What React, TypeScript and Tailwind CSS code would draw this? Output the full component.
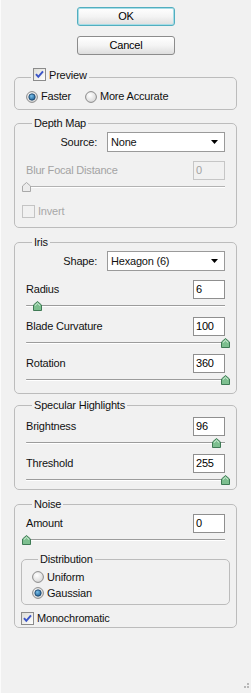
import type { ReactNode } from "react";

function Btn({ label, primary }: { label: string; primary?: boolean }) {
    return (
        <button
            className={`ml-[77px] flex h-[19px] w-[98px] items-center justify-center rounded-[3px] border bg-gradient-to-b from-white via-[#f4f4f4] to-[#dedede] text-[11px] text-black ${primary ? "border-[#52aebf] shadow-[inset_0_0_0_1px_#a6dde7]" : "border-[#8c8c8c]"}`}
        >
            {label}
        </button>
    );
}

function Check({ checked, disabled }: { checked?: boolean; disabled?: boolean }) {
    return (
        <svg width="13" height="13" viewBox="0 0 13 13" className="shrink-0">
            <defs>
                <linearGradient id="cbg" x1="0" y1="0" x2="1" y2="1">
                    <stop offset="0" stopColor="#dcdcd6" />
                    <stop offset="1" stopColor="#ffffff" />
                </linearGradient>
            </defs>
            <rect x="0.5" y="0.5" width="12" height="12" fill={disabled ? "#f1f1f1" : "url(#cbg)"} stroke={disabled ? "#c4c4c4" : "#8b8b8b"} />
            {checked && <path d="M3 6.2 L5.3 8.8 L10 3.4" fill="none" stroke="#3b55c8" strokeWidth="2" />}
        </svg>
    );
}

function Radio({ checked }: { checked?: boolean }) {
    return (
        <svg width="12" height="12" viewBox="0 0 12 12" className="shrink-0">
            <defs>
                <radialGradient id="rbg" cx="0.4" cy="0.35" r="0.7">
                    <stop offset="0" stopColor="#ffffff" />
                    <stop offset="1" stopColor="#d6d6d6" />
                </radialGradient>
                <radialGradient id="rdot" cx="0.4" cy="0.35" r="0.7">
                    <stop offset="0" stopColor="#7bc0ea" />
                    <stop offset="1" stopColor="#1b5d93" />
                </radialGradient>
            </defs>
            <circle cx="6" cy="6" r="5.4" fill="url(#rbg)" stroke="#8a8a8a" strokeWidth="1" />
            {checked && <circle cx="6" cy="6" r="3.2" fill="url(#rdot)" stroke="#163e63" strokeWidth="0.8" />}
        </svg>
    );
}

function Slider({ frac, disabled }: { frac: number; disabled?: boolean }) {
    return (
        <div className="relative h-[14px] w-full">
            <div className={`absolute left-0 right-0 top-[6px] h-px rounded-l-full ${disabled ? "bg-[#b3b3b3]" : "bg-[#9c9c9c]"}`} />
            <div className="absolute left-0 right-0 top-[7px] h-px bg-white" />
            <svg
                width="9"
                height="10"
                viewBox="0 0 9 10"
                className="absolute top-[2px]"
                style={{ left: `calc(${frac * 100}% - 4.5px)` }}
            >
                <path
                    d="M4.5 0.5 L8.5 4 L8.5 9.5 L0.5 9.5 L0.5 4 Z"
                    fill={disabled ? "#ececec" : "#7dbf8f"}
                    stroke={disabled ? "#a9a9a9" : "#3f7a55"}
                    strokeWidth="1"
                />
                {!disabled && <path d="M2 4.5 L4.5 2.3 L7 4.5" fill="none" stroke="#d9f1df" strokeWidth="1" />}
            </svg>
        </div>
    );
}

function Num({ value, disabled }: { value: string; disabled?: boolean }) {
    return (
        <div
            className={`flex h-[19px] w-[32px] items-center border pl-[2px] ${disabled ? "border-[#c6c6c6] bg-[#f1f1f1] text-[#a3a3a3]" : "border-[#8f8f8f] bg-white text-black"}`}
        >
            {value}
        </div>
    );
}

function Field({ label, value, frac, disabled, className = "" }: { label: string; value: string; frac: number; disabled?: boolean; className?: string }) {
    return (
        <div className={className}>
            <div className={`flex items-center justify-between ${disabled ? "text-[#a3a3a3]" : ""}`}>
                <span>{label}</span>
                <Num value={value} disabled={disabled} />
            </div>
            <Slider frac={frac} disabled={disabled} />
        </div>
    );
}

function Pick({ label, value, className = "" }: { label: string; value: string; className?: string }) {
    return (
        <div className={`flex items-center ${className}`}>
            <span className="w-[81px] shrink-0 pr-[10px] text-right">{label}</span>
            <div className="flex h-[20px] flex-1 items-center justify-between border border-[#9a9a9a] bg-white pl-[3px] pr-[6px]">
                <span>{value}</span>
                <svg width="7" height="4" viewBox="0 0 7 4">
                    <path d="M0 0 H7 L3.5 4 Z" fill="#000" />
                </svg>
            </div>
        </div>
    );
}

function Group({ legend, children, className = "", inner }: { legend: ReactNode; children: ReactNode; className?: string; inner?: boolean }) {
    return (
        <fieldset className={`rounded-[5px] border border-[#bcbcbc] ${inner ? "pl-[10px] pr-[10px]" : "px-[11px]"} ${className}`}>
            <legend className="ml-[6px] flex h-[14px] items-center px-[2px] leading-[14px]">{legend}</legend>
            {children}
        </fieldset>
    );
}

export default function App() {
    return (
        <div className="h-[693px] w-[251px] overflow-hidden border-l border-l-[#fbfbfb] bg-[#f1f1f1] pt-[7px] font-['Liberation_Sans',Arial,sans-serif] text-[11px] leading-[13px] tracking-[-0.2px] text-[#111]">
            <div className="-ml-px">
                <Btn label="OK" primary />
                <div className="mt-[10px]">
                    <Btn label="Cancel" />
                </div>
            </div>

            <div className="-ml-px px-[14px]">
                {/* Preview */}
                <fieldset className="mt-[13px] rounded-[5px] border border-[#bcbcbc] px-[11px] pb-[6px]">
                    <legend className="ml-[5px] flex h-[18px] items-start gap-[3px] px-[2px]">
                        <Check checked />
                        <span className="pt-px">Preview</span>
                    </legend>
                    <div className="mt-[4px] flex h-[13px] items-center">
                        <Radio checked />
                        <span className="ml-[3px]">Faster</span>
                        <span className="ml-[14px]">
                            <Radio />
                        </span>
                        <span className="ml-[3px]">More Accurate</span>
                    </div>
                </fieldset>

                {/* Depth Map */}
                <Group legend="Depth Map" className="mt-[6px] pb-[9px]">
                    <Pick label="Source:" value="None" className="mt-[2px]" />
                    <Field label="Blur Focal Distance" value="0" frac={0} disabled className="mt-[9px]" />
                    <div className="-ml-[4px] mt-[11px] flex items-center gap-[3px] text-[#a8a8a8]">
                        <Check disabled />
                        <span>Invert</span>
                    </div>
                </Group>

                {/* Iris */}
                <Group legend="Iris" className="mt-[7px] pb-[6px]">
                    <Pick label="Shape:" value="Hexagon (6)" className="mt-[2px]" />
                    <Field label="Radius" value="6" frac={0.06} className="mt-[9px]" />
                    <Field label="Blade Curvature" value="100" frac={1} className="mt-[4px]" />
                    <Field label="Rotation" value="360" frac={1} className="mt-[4px]" />
                </Group>

                {/* Specular Highlights */}
                <Group legend="Specular Highlights" className="mt-[4px] pb-[2px]">
                    <Field label="Brightness" value="96" frac={0.955} className="mt-[5px]" />
                    <Field label="Threshold" value="255" frac={1} className="mt-[4px]" />
                </Group>

                {/* Noise */}
                <Group legend="Noise" className="mt-[7px] pb-[2px]">
                    <Field label="Amount" value="0" frac={0} className="mt-[3px]" />
                    <Group legend="Distribution" inner className="-mx-[5px] mt-[5px] pb-[4px]">
                        <div className="mt-[4px] flex h-[14px] items-center gap-[3px]">
                            <Radio />
                            <span>Uniform</span>
                        </div>
                        <div className="mt-[2px] flex h-[14px] items-center gap-[3px]">
                            <Radio checked />
                            <span>Gaussian</span>
                        </div>
                    </Group>
                    <div className="-ml-[5px] mt-[7px] flex items-center gap-[3px]">
                        <Check checked />
                        <span>Monochromatic</span>
                    </div>
                </Group>
            </div>

            <div className="ml-[240px] mt-[55px] grid w-[8px] grid-cols-3 gap-px">
                {Array.from({ length: 6 }).map((_, i) => (
                    <span key={i} className={`h-[2px] w-[2px] ${[2, 4, 5].includes(i) ? "bg-[#b8b8b8]" : "bg-transparent"}`} />
                ))}
            </div>
        </div>
    );
}
